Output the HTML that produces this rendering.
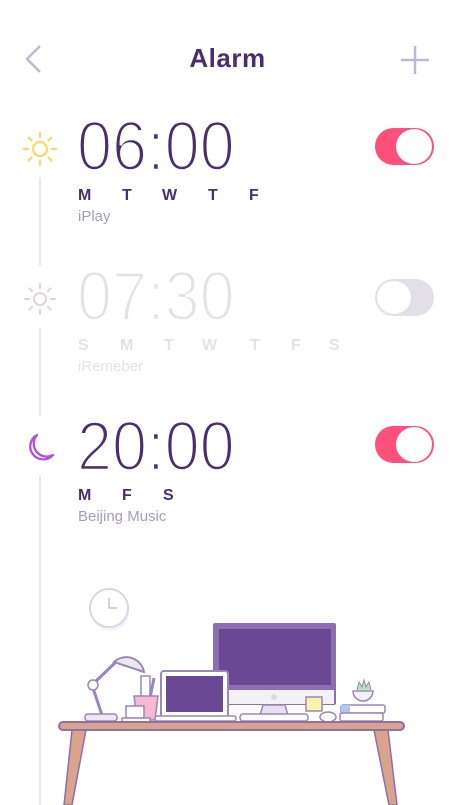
<!DOCTYPE html>
<html><head><meta charset="utf-8"><style>
*{margin:0;padding:0;box-sizing:border-box}
body{width:455px;height:805px;background:#fff;position:relative;overflow:hidden;font-family:"Liberation Sans",sans-serif}
.a{position:absolute}
.title{left:0;width:455px;text-align:center;top:43px;font-size:26px;font-weight:bold;color:#4b2e6e;letter-spacing:0.5px}
.time{font-size:70px;line-height:70px;transform:scaleX(0.9);transform-origin:left top;left:77px;color:#4b2e6e;white-space:nowrap;-webkit-text-stroke:2.6px #fff}
.d{font-size:16px;line-height:17px;color:#4b2e6e;font-weight:bold}
.lbl{font-size:15px;line-height:15px;color:#a99cba;left:78px}
.vl{left:39px;width:2px;background:#e8e6ef}
.tg{width:59px;height:37px;border-radius:19px}
</style></head><body>
<svg class="a" style="left:22px;top:44px" width="22" height="32"><path d="M18 2 L5 15 L18 28" fill="none" stroke="#c3b6d3" stroke-width="2.5"/></svg>
<div class="a title">Alarm</div>
<svg class="a" style="left:400px;top:45px" width="30" height="30"><path d="M15 1V29M1 15H29" stroke="#c3b6d3" stroke-width="2.5"/></svg>

<div class="a vl" style="top:178px;height:88px"></div>
<div class="a vl" style="top:328px;height:88px"></div>
<div class="a vl" style="top:475px;height:330px"></div>

<svg class="a" style="left:22px;top:131px" width="36" height="36" viewBox="0 0 36 36"><g stroke="#fdd763" stroke-width="2.2" fill="none" stroke-linecap="round"><circle cx="18" cy="18" r="7"/><path d="M18 2v4M18 30v4M2 18h4M30 18h4M6.7 6.7l2.8 2.8M26.5 26.5l2.8 2.8M6.7 29.3l2.8-2.8M26.5 9.5l2.8-2.8"/></g></svg>
<div class="a time" style="top:111px">06:00</div>
<div class="a d" style="top:187px;left:78px">M</div><div class="a d" style="top:187px;left:122px">T</div><div class="a d" style="top:187px;left:162px">W</div><div class="a d" style="top:187px;left:208px">T</div><div class="a d" style="top:187px;left:249px">F</div>
<div class="a lbl" style="top:209px">iPlay</div>
<div class="a tg" style="left:375px;top:128px;background:#ff4f7b"></div>
<div class="a" style="left:396px;top:129px;width:36px;height:35px;border-radius:50%;background:#fff"></div>

<svg class="a" style="left:22px;top:281px" width="36" height="36" viewBox="0 0 36 36"><g stroke="#d8d4e0" stroke-width="2" fill="none" stroke-linecap="round"><circle cx="18" cy="18" r="6"/><path d="M18 3v4M18 29v4M3 18h4M29 18h4M7.4 7.4l2.8 2.8M25.8 25.8l2.8 2.8M7.4 28.6l2.8-2.8M25.8 10.2l2.8-2.8"/></g></svg>
<div class="a time" style="top:261px;color:#e4e1ea">07:30</div>
<div class="a d" style="top:337px;left:78px;color:#e4e1ea">S</div><div class="a d" style="top:337px;left:120px;color:#e4e1ea">M</div><div class="a d" style="top:337px;left:164px;color:#e4e1ea">T</div><div class="a d" style="top:337px;left:202px;color:#e4e1ea">W</div><div class="a d" style="top:337px;left:250px;color:#e4e1ea">T</div><div class="a d" style="top:337px;left:291px;color:#e4e1ea">F</div><div class="a d" style="top:337px;left:329px;color:#e4e1ea">S</div>
<div class="a lbl" style="top:359px;color:#e4e1ea">iRemeber</div>
<div class="a tg" style="left:375px;top:279px;background:#e3dfe8"></div>
<div class="a" style="left:376px;top:280px;width:36px;height:35px;border-radius:50%;background:#fff;border:1px solid #e3dfe8"></div>

<svg class="a" style="left:24px;top:430px" width="34" height="34" viewBox="0 0 34 34"><path d="M13 5 A13 13 0 1 0 29 25 A13 13 0 0 1 13 5Z" fill="none" stroke="#b44fe0" stroke-width="2.3" stroke-linejoin="round"/></svg>
<div class="a time" style="top:411px">20:00</div>
<div class="a d" style="top:487px;left:78px">M</div><div class="a d" style="top:487px;left:122px">F</div><div class="a d" style="top:487px;left:163px">S</div>
<div class="a lbl" style="top:509px">Beijing Music</div>
<div class="a tg" style="left:375px;top:426px;background:#ff4f7b"></div>
<div class="a" style="left:396px;top:427px;width:36px;height:35px;border-radius:50%;background:#fff"></div>

<svg class="a" style="left:0;top:580px" width="455" height="225" viewBox="0 580 455 225">
<circle cx="110" cy="612" r="19" fill="#f4f2f7"/>
<circle cx="109" cy="608" r="19" fill="#fff" stroke="#dcd4e6" stroke-width="2"/>
<path d="M109 598v10h8" stroke="#c9bfd6" stroke-width="1.5" fill="none"/>
<rect x="213" y="623" width="123" height="82" rx="2" fill="#8c6fb0"/>
<rect x="219" y="629" width="112" height="56" fill="#6a4893"/>
<rect x="215" y="690" width="119" height="14" fill="#f3f1f6"/>
<circle cx="274" cy="697" r="3" fill="#ddd7e6"/>
<path d="M263 705h22l3 10h-28z" fill="#e5e0ec" stroke="#9b86b8" stroke-width="1.5"/>
<rect x="240" y="714" width="68" height="7" rx="3" fill="#fff" stroke="#9b86b8" stroke-width="1.5"/>
<rect x="306" y="697" width="16" height="14" fill="#fbf3a6" stroke="#9b86b8" stroke-width="1.5"/>
<ellipse cx="328" cy="717" rx="8" ry="5" fill="#fff" stroke="#9b86b8" stroke-width="1.5"/>
<rect x="161" y="671" width="67" height="46" rx="3" fill="#fff" stroke="#9b86b8" stroke-width="2"/>
<rect x="166" y="676" width="57" height="36" fill="#6a4893"/>
<rect x="155" y="716" width="81" height="5" rx="2" fill="#fff" stroke="#9b86b8" stroke-width="1.5"/>
<rect x="141" y="676" width="9" height="22" fill="#fff" stroke="#9b86b8" stroke-width="1.5"/>
<path d="M150 698l4-20" stroke="#9b86b8" stroke-width="3"/>
<path d="M134 696h24l-3 24h-18z" fill="#f8b7d3" stroke="#9b86b8" stroke-width="1.5"/>
<rect x="126" y="706" width="18" height="12" fill="#fff" stroke="#9b86b8" stroke-width="1.5"/>
<rect x="122" y="718" width="28" height="4" fill="#fff" stroke="#9b86b8" stroke-width="1.5"/>
<path d="M93 688L103 718" stroke="#9b86b8" stroke-width="3"/>
<path d="M93 684L118 660" stroke="#9b86b8" stroke-width="3"/>
<circle cx="93" cy="685" r="5" fill="#fff" stroke="#9b86b8" stroke-width="1.5"/>
<path d="M114 662a18 18 0 0 1 30 10z" fill="#ece7f3" stroke="#9b86b8" stroke-width="2"/>
<rect x="85" y="714" width="32" height="7" rx="3" fill="#ece7f3" stroke="#9b86b8" stroke-width="1.5"/>
<rect x="341" y="705" width="44" height="8" rx="2" fill="#fff" stroke="#9b86b8" stroke-width="1.5"/>
<rect x="341" y="705" width="9" height="8" fill="#b0c6ee"/>
<rect x="340" y="713" width="43" height="8" rx="2" fill="#fff" stroke="#9b86b8" stroke-width="1.5"/>
<path d="M353 691h20a10 10 0 0 1-20 0z" fill="#f3f1f6" stroke="#9b86b8" stroke-width="1.5"/>
<path d="M357 690l2-8 3 5 2-7 2 7 3-5 2 8" fill="#b7e4b2" stroke="#9b86b8" stroke-width="1"/>
<path d="M72 730L64 805h8l14-75zM374 730l15 75h8l-9-75z" fill="#d9a48a" stroke="#8c6fb0" stroke-width="1.5"/>
<rect x="59" y="722" width="345" height="8" rx="4" fill="#d9a48a" stroke="#8c6fb0" stroke-width="2"/>
</svg>
</body></html>
